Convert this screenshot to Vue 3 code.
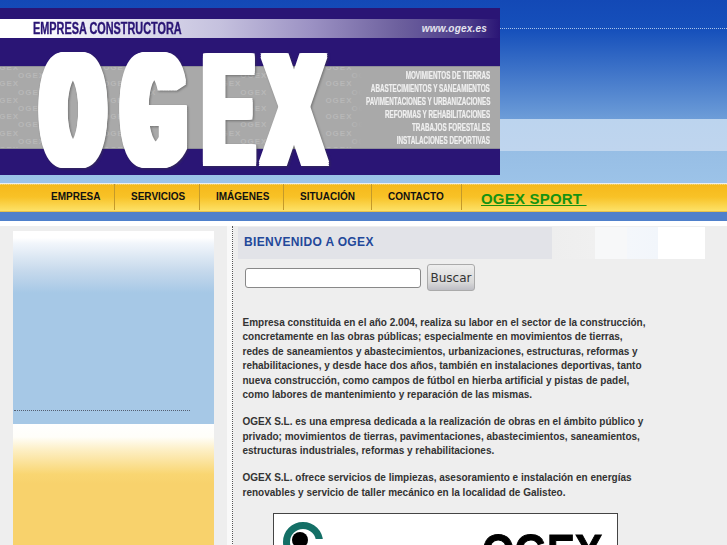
<script setup>
const rows = Array.from({ length: 11 }, (_, i) => i)
const services = [
  'MOVIMIENTOS DE TIERRAS',
  'ABASTECIMIENTOS Y SANEAMIENTOS',
  'PAVIMENTACIONES Y URBANIZACIONES',
  'REFORMAS Y REHABILITACIONES',
  'TRABAJOS FORESTALES',
  'INSTALACIONES DEPORTIVAS'
]
const menu = ['EMPRESA', 'SERVICIOS', 'IMÁGENES', 'SITUACIÓN', 'CONTACTO']

function thicken(ex, ey) {
  const out = []
  for (let x = -ex; x <= ex; x += 2) {
    for (let y = -ey; y <= ey; y += 2) {
      out.push(`${x}px ${y}px #fff`)
    }
  }
  return { textShadow: out.join(',') }
}
const heavyRound = thicken(20, 2)
const heavyE = thicken(12, 2)
const heavyX = thicken(14, 2)
</script>

<template>
  <div class="page">
    <header class="top">
      <div class="banner">
        <div class="strip">
          <span class="slogan">EMPRESA CONSTRUCTORA</span>
          <span class="url">www.ogex.es</span>
        </div>
        <div class="band">
          <div class="marks">
            <div v-for="r in rows" :key="r" class="mark-row" :class="{ shifted: r % 2 === 1 }">
              <span v-for="n in 4" :key="n">OGEX</span>
            </div>
          </div>
          <ul class="services">
            <li v-for="s in services" :key="s"><span>{{ s }}</span></li>
          </ul>
        </div>
        <div class="logo-word">
          <span class="l-o" :style="heavyRound">O</span><span class="l-g" :style="heavyRound">G</span><span class="l-e" :style="heavyE">E</span><span class="l-x" :style="heavyX">X</span>
        </div>
      </div>
      <div class="dots"></div>
    </header>

    <nav class="nav">
      <a v-for="m in menu" :key="m" class="item">{{ m }}</a>
      <a class="sport">OGEX SPORT&nbsp;</a>
    </nav>
    <div class="blue"></div>

    <main class="main">
      <aside class="side">
        <div class="box-blue"><div class="side-dots"></div></div>
        <div class="box-yellow"></div>
      </aside>
      <div class="rule"></div>
      <section class="content">
        <div class="head"><h1>BIENVENIDO A OGEX</h1></div>
        <form class="search" @submit.prevent>
          <input type="text" />
          <button type="submit">Buscar</button>
        </form>
        <p>Empresa constituida en el año 2.004, realiza su labor en el sector de la construcción,<br>concretamente en las obras públicas; especialmente en movimientos de tierras,<br>redes de saneamientos y abastecimientos, urbanizaciones, estructuras, reformas y<br>rehabilitaciones, y desde hace dos años, también en instalaciones deportivas, tanto<br>nueva construcción, como campos de fútbol en hierba artificial y pistas de padel,<br>como labores de mantenimiento y reparación de las mismas.</p>
        <p>OGEX S.L. es una empresa dedicada a la realización de obras en el ámbito público y<br>privado; movimientos de tierras, pavimentaciones, abastecimientos, saneamientos,<br>estructuras industriales, reformas y rehabilitaciones.</p>
        <p>OGEX S.L. ofrece servicios de limpiezas, asesoramiento e instalación en energías<br>renovables y servicio de taller mecánico en la localidad de Galisteo.</p>
        <div class="sport-card">
          <svg class="emblem" width="44" height="44" viewBox="0 0 44 44">
            <circle cx="22" cy="23" r="16.5" fill="none" stroke="#146f66" stroke-width="7" />
            <rect x="24" y="20" width="20" height="6" fill="#fff" />
            <circle cx="19" cy="21" r="8" fill="#000" />
          </svg>
          <span class="card-word">OGEX</span>
        </div>
      </section>
    </main>
  </div>
</template>

<style scoped>
.page {
  width: 727px;
  height: 545px;
  overflow: hidden;
  background: #eeeeee;
  font-family: "Liberation Sans", Arial, sans-serif;
}
.top {
  display: flex;
  align-items: flex-start;
  height: 183px;
  padding-top: 8px;
  box-sizing: border-box;
  background: linear-gradient(to bottom, #1349b6 0, #1650bb 30px, #6d9dd8 119px, #bcd4ee 119px, #bfd5ee 151px, #97bee5 151px, #9cc3e8 183px);
}
.banner {
  position: relative;
  flex: none;
  width: 500px;
  height: 167px;
  overflow: hidden;
  background: #2a1575;
}
.strip {
  display: flex;
  align-items: center;
  justify-content: space-between;
  height: 19px;
  margin-top: 11px;
  padding: 0 13px 0 33px;
  background: linear-gradient(to right, #fff 0, #fff 30px, #e4e4f1 110px, #c5c1de 220px, #9c92c4 310px, #6c5f9d 400px, #4a3a8a 470px, #2a1575 500px);
}
.slogan {
  display: block;
  font-size: 16px;
  font-weight: 700;
  color: #2a1575;
  transform: scaleX(.68);
  transform-origin: left center;
  white-space: nowrap;
  -webkit-text-stroke: .4px #2a1575;
}
.url {
  font-size: 10px;
  font-weight: 700;
  font-style: italic;
  color: #e4e4ee;
  letter-spacing: .2px;
}
.band {
  position: relative;
  height: 83px;
  margin-top: 28px;
  background: #a9a9a9;
  border-bottom: 1px solid #8f8f99;
  border-top: 1px solid #8f8f99;
  box-sizing: border-box;
  overflow: hidden;
}
.marks {
  display: flex;
  flex-direction: column;
  margin-top: -3px;
}
.mark-row {
  display: flex;
  gap: 84px;
  height: 8.2px;
  line-height: 8.2px;
  margin-left: -8px;
  font-size: 8px;
  font-weight: 700;
  letter-spacing: 1px;
  color: #b8b8b8;
}
.mark-row.shifted { margin-left: 18px; }
.mark-row span { flex: none; }
.services {
  position: absolute;
  top: 2px;
  right: 10px;
  width: 140px;
  margin: 0;
  padding: 0;
  list-style: none;
  background: linear-gradient(to right, rgba(169,169,169,0) 0, #a9a9a9 12px);
}
.services li {
  display: flex;
  justify-content: flex-end;
  height: 13px;
  line-height: 13px;
  white-space: nowrap;
}
.services span {
  flex: none;
  font-size: 10px;
  font-weight: 700;
  color: #f0f0f0;
  transform: scaleX(.63);
  transform-origin: right center;
  -webkit-text-stroke: .2px #f0f0f0;
}
.logo-word {
  position: absolute;
  top: 16px;
  left: 38px;
  display: flex;
  line-height: 170px;
  height: 170px;
  font-size: 158px;
  font-weight: 700;
  color: #fff;
  filter: drop-shadow(1px 1px 1px rgba(60, 60, 60, .5));
}
.logo-word span {
  display: flex;
  justify-content: center;
  flex: none;
  transform: scaleX(.46);
}
.l-o { width: 70px; }
.l-g { width: 72px; margin-left: 10px; }
.logo-word .l-e { width: 53px; margin-left: 12px; transform: scaleX(.47); }
.logo-word .l-x { width: 72px; margin-left: 3px; transform: scaleX(.54); }
.dots {
  flex: 1;
  margin-top: 20px;
  border-top: 1px dotted #a9c4ea;
}
.nav {
  display: grid;
  grid-template-columns: 80px 85px 84px 88px 90px auto;
  justify-content: start;
  height: 28px;
  margin-top: 1px;
  padding-left: 35px;
  box-sizing: border-box;
  background: linear-gradient(to bottom, #f6b91b 0, #f8c227 12px, #fde268 26px, #d0a030 27px, #b08a30 28px);
  border-top: 1px dotted #ffd764;
}
.item {
  display: flex;
  align-items: center;
  height: 26px;
  padding: 0 0 2px 16px;
  margin-top: -1px;
  box-sizing: border-box;
  font-size: 10px;
  font-weight: 700;
  color: #111;
  border-right: 1px solid #c49a2a;
  white-space: nowrap;
}
.sport {
  margin-left: 19px;
  font-size: 15px;
  letter-spacing: .2px;
  line-height: 27px;
  font-weight: 700;
  color: #169211;
  text-decoration: underline;
  white-space: nowrap;
}
.blue {
  height: 9px;
  background: #4f80cb;
  border-bottom: 5px solid #fff;
}
.main {
  display: flex;
  align-items: flex-start;
}
.side {
  flex: none;
  width: 201px;
  margin: 5px 0 0 13px;
}
.box-blue {
  height: 193px;
  padding-top: 7px;
  box-sizing: border-box;
  background: linear-gradient(to bottom, #fff 0, #fff 7px, #f2f6fb 12px, #c6d9ec 40px, #a6c8e6 62px);
  display: flex;
  flex-direction: column;
  justify-content: flex-end;
}
.side-dots {
  width: 176px;
  margin: 0 0 13px 1px;
  border-top: 1px dotted #555f70;
}
.box-yellow {
  height: 140px;
  background: linear-gradient(to bottom, #fff 0, #fffef9 13px, #fdf0c8 25px, #f9d672 50px, #f8d26c 60px);
}
.rule {
  flex: none;
  width: 5px;
  height: 320px;
  margin-left: 13px;
  background: #f9f9f9;
  border-right: 1px dotted #555;
}
.content {
  flex: none;
  width: 480px;
  margin-left: 5px;
  padding-top: 1px;
}
.head {
  width: 467px;
  height: 32px;
  background: linear-gradient(to right, #e2e3e8 0, #e2e3e8 314px, #eeeeee 314px, #f0f0f0 357px, #f7f8f9 357px, #f7f8f9 389px, #f4f7fb 389px, #f2f6fb 420px, #fff 420px, #fff 467px);
}
.head h1 {
  margin: 0;
  padding-left: 6px;
  line-height: 31px;
  font-size: 12px;
  font-weight: 700;
  letter-spacing: .35px;
  color: #23489a;
}
.search {
  display: flex;
  align-items: center;
  gap: 6px;
  height: 27px;
  margin: 5px 0 0 7px;
}
.search input {
  width: 176px;
  height: 20px;
  padding: 0;
  box-sizing: border-box;
  border: 1px solid #888;
  border-radius: 3px;
  background: #fff;
  outline: none;
}
.search button {
  width: 48px;
  height: 27px;
  padding: 0;
  border: 1px solid #aaa;
  border-radius: 3px;
  background: linear-gradient(to bottom, #eeeeee, #d8d8d8 70%, #bdbdc4);
  font-family: "DejaVu Sans", sans-serif;
  font-size: 12px;
  color: #333;
}
p {
  margin: 0 0 12.8px 4.5px;
  font-size: 10px;
  line-height: 14.4px;
  font-weight: 700;
  color: #333;
  white-space: nowrap;
}
.search + p { margin-top: 25px; }
.sport-card {
  display: flex;
  justify-content: space-between;
  box-sizing: border-box;
  width: 345px;
  height: 120px;
  margin: 0 0 0 35px;
  padding: 5px 14px 0 7px;
  background: #fff;
  border: 1px solid #444;
}
.emblem { flex: none; }
.card-word {
  margin-top: 3px;
  font-size: 48px;
  line-height: 60px;
  font-weight: 700;
  color: #000;
  transform: scaleX(.87);
  transform-origin: right top;
  -webkit-text-stroke: 1px #000;
}
</style>
